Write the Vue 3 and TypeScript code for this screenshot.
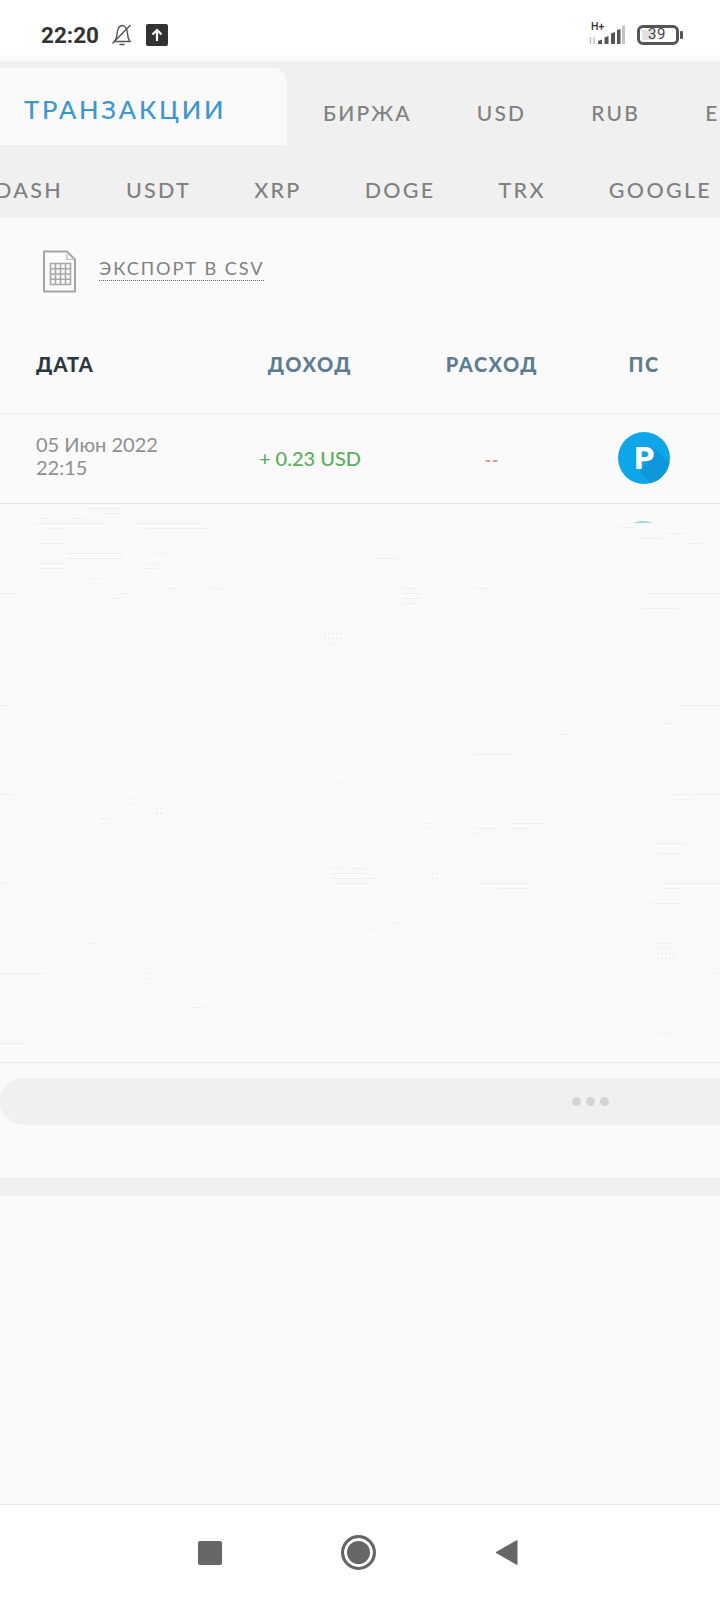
<script setup lang="ts">
const rowOne = ['БИРЖА', 'USD', 'RUB', 'EUR']
const rowTwo = ['DASH', 'USDT', 'XRP', 'DOGE', 'TRX', 'GOOGLE']

// Faint rendering residue left on the empty table area: [x1, x2, y]
const residue: [number, number, number][] = [
  [88,120,508],[100,120,513],[38,50,518],[70,82,518],[85,90,518],[35,108,523],[135,200,523],
  [50,63,528],[145,208,528],[40,65,543],[65,122,553],[155,167,553],[68,122,558],[40,65,563],
  [147,158,563],[40,65,568],[143,157,568],[90,100,578],[0,20,593],[120,130,593],[175,180,593],
  [165,180,588],[210,223,588],[110,120,598],[620,633,527],[668,685,533],[637,663,538],[687,702,543],
  [372,398,558],[402,420,588],[402,420,593],[402,420,598],[402,420,603],[475,488,588],[647,720,593],
  [642,678,608],[285,289,648],[0,9,705],[680,720,705],[661,675,723],[556,572,734],[473,512,754],
  [340,347,783],[0,14,794],[673,720,794],[673,689,799],[512,544,823],[475,496,828],[512,528,828],
  [471,478,833],[654,686,843],[657,680,853],[331,342,868],[351,367,868],[331,367,873],[333,379,878],
  [333,372,883],[480,530,883],[498,530,888],[663,720,883],[663,682,888],
  [0,7,883],[652,680,903],[393,400,923],[370,374,928],[445,450,918],[85,95,943],
  [0,45,973],[714,720,973],[192,204,1007],[659,670,1033],[0,25,1043]
]
const dotted: [number, number, number][] = [
  [324,342,633],[324,342,638],[330,342,643],[126,135,798],[126,135,803],[156,164,808],[156,164,813],
  [101,110,818],[103,110,823],[425,430,823],[425,430,828],[432,441,873],[432,441,878],
  [657,675,943],[657,675,948],[657,675,953],[657,675,958],[142,152,973],[142,152,978]
]
const toPath = (list: [number, number, number][]) =>
  list.map(([a, b, y]) => `M${a} ${y + 0.5}H${b}`).join('')
const residuePath = toPath(residue)
const dottedPath = toPath(dotted)
</script>

<template>
  <div class="page">
    <header class="status">
      <span class="clock">22:20</span>
      <svg class="bell" width="22" height="22" viewBox="0 0 22 22" fill="none" stroke="#555" stroke-width="1.400">
        <path d="M3.500 17.500c1.500-1.600 2.300-3.800 2.500-7C6.300 5.500 8 1.800 11 1.500c3.300-.2 5.300 3.500 5.600 8.500.2 3 .9 5.800 2.400 7.500Z" />
        <path d="M8.500 20.500h5M1.500 19.500 19.500 1" />
      </svg>
      <span class="upload">
        <svg width="22" height="22" viewBox="0 0 22 22" fill="none" stroke="#fff" stroke-width="2.200">
          <path d="M11 17V6.500M6.500 10.500 11 6l4.500 4.500" />
        </svg>
      </span>
      <div class="status-right">
        <div class="signal">
          <span class="hplus">H+</span>
          <svg width="38" height="20" viewBox="0 0 38 20">
            <path d="M2.500 12v7M6 12v7" stroke="#bbb" stroke-width="1.300" />
            <path d="M10 19v-3l4-1.500V19ZM16.500 19v-6.500l4-1.500v8ZM23 19V8.500l4-1.500v12ZM29 19V5l3.500-1v15Z" fill="#555" />
            <path d="M34 19V1l3-1v19Z" fill="#c4c4c4" />
          </svg>
        </div>
        <div class="battery">
          <span class="battery-body"><i class="battery-fill"></i><b class="battery-num">39</b></span>
          <i class="battery-tip"></i>
        </div>
      </div>
    </header>

    <main class="content">
      <div class="tabs">
        <div class="tab-row first">
          <span class="tab-active">ТРАНЗАКЦИИ</span>
          <span v-for="t in rowOne" :key="t" class="tab">{{ t }}</span>
        </div>
        <div class="tab-row second">
          <span v-for="t in rowTwo" :key="t" class="tab">{{ t }}</span>
        </div>
      </div>

      <div class="export">
        <svg width="35" height="44" viewBox="0 0 35 44" fill="none">
          <path d="M2 2.500h23l8 8v32H2Z" stroke="#a5a5a5" stroke-width="2" stroke-linejoin="round" />
          <path d="M25 2.500V10.500h8" stroke="#bdbdbd" stroke-width="1.200" />
          <path d="M8.500 14.500h20v21h-20ZM8.500 19.700h20M8.500 25h20M8.500 30.200h20M13.500 14.500v21M18.500 14.500v21M23.500 14.500v21" stroke="#a8a8a8" stroke-width="1.600" />
        </svg>
        <span class="export-link">ЭКСПОРТ В CSV</span>
      </div>

      <div class="thead grid">
        <span class="th-date">ДАТА</span>
        <span class="th">ДОХОД</span>
        <span class="th">РАСХОД</span>
        <span class="th">ПС</span>
      </div>
      <div class="trow grid">
        <div class="date">05 Июн 2022<br />22:15</div>
        <span class="income">+ 0.23 USD</span>
        <span class="expense">--</span>
        <span class="ps">
          <svg width="52" height="52" viewBox="0 0 52 52">
            <defs><clipPath id="ps-clip"><circle cx="26" cy="26" r="26" /></clipPath></defs>
            <circle cx="26" cy="26" r="26" fill="#0fa5e9" />
            <path d="M36 16 L62 42 L42 62 L22 40Z" fill="#0f97dc" clip-path="url(#ps-clip)" />
            <text x="26.500" y="37" text-anchor="middle" class="ps-letter">P</text>
          </svg>
        </span>
      </div>

      <div class="empty"></div>

      <div class="pager"><i></i><i></i><i></i></div>
      <div class="strip"></div>
    </main>

    <nav class="nav">
      <i class="nav-square"></i>
      <i class="nav-circle"></i>
      <svg width="23" height="27" viewBox="0 0 23 27"><path d="M22 1.500v24L1 13.500Z" fill="#666" stroke="#666" stroke-linejoin="round" /></svg>
    </nav>

    <svg class="residue" width="720" height="1600" viewBox="0 0 720 1600" fill="none">
      <path :d="residuePath" stroke="#efefef" stroke-width="1" />
      <path :d="dottedPath" stroke="#e9e9e9" stroke-width="1" stroke-dasharray="2 2" />
      <path d="M633 522.500Q643 520.300 653 522.500Z" fill="#4fb0dc" />
    </svg>
  </div>
</template>

<style scoped>
.page {
  position: relative;
  width: 720px;
  min-height: 1600px;
  display: flex;
  flex-direction: column;
  overflow: hidden;
  background: #fafafa;
  font-family: "Lato", "Noto Sans", sans-serif;
}
.status {
  height: 55px;
  flex: none;
  display: flex;
  align-items: center;
  padding: 14px 37px 0 41px;
  box-sizing: border-box;
  background: #fff;
}
.clock {
  font-family: Roboto, sans-serif;
  font-size: 22.500px;
  font-weight: 700;
  color: #333;
  width: 70px;
}
.upload {
  display: flex;
  width: 22px;
  height: 22px;
  margin-left: 13px;
  border-radius: 2px;
  background: #333;
}
.status-right {
  margin-left: auto;
  display: flex;
  align-items: flex-end;
  gap: 11px;
}
.signal {
  position: relative;
  width: 38px;
  height: 20px;
}
.signal svg { display: block; }
.hplus {
  position: absolute;
  left: 3px;
  top: -3px;
  font: 500 10.500px/10px Roboto, sans-serif;
  color: #333;
}
.battery {
  display: flex;
  align-items: center;
  gap: 1px;
}
.battery-body {
  position: relative;
  width: 42px;
  height: 20px;
  box-sizing: border-box;
  border: 3px solid #555;
  border-radius: 6px;
  display: flex;
  align-items: center;
  justify-content: center;
}
.battery-fill {
  position: absolute;
  left: 2px;
  top: 2px;
  bottom: 2px;
  width: 12px;
  background: #e0e0e0;
}
.battery-num {
  position: relative;
  font: 400 15px/1 Roboto, sans-serif;
  color: #444;
  letter-spacing: 0.5px;
  margin-left: -2px;
}
.battery-tip {
  width: 3px;
  height: 8px;
  background: #555;
  border-radius: 1px;
}
.content {
  flex: 1;
  display: flex;
  flex-direction: column;
  padding-top: 6px;
}
.tabs {
  background: #f0f0f0;
  height: 157px;
  padding-top: 7px;
  box-sizing: border-box;
  overflow: hidden;
}
.tab-row {
  display: flex;
  align-items: center;
  white-space: nowrap;
}
.first {
  height: 77px;
  gap: 65px;
}
.first .tab {
  margin-top: 12px;
  font-size: 21px;
  letter-spacing: 2.200px;
}
.second {
  height: 73px;
  gap: 63px;
  margin-left: -5px;
  padding-top: 16px;
  box-sizing: border-box;
}
.tab, .tab-active { flex: none; }
.tab-active {
  align-self: stretch;
  display: flex;
  align-items: center;
  box-sizing: border-box;
  width: 287px;
  margin-right: -29px;
  padding: 5px 0 0 24px;
  border-radius: 0 14px 0 0;
  background: #fafafa;
  color: #3d97cf;
  font-size: 25.500px;
  font-weight: 500;
  letter-spacing: 2.800px;
}
.tab {
  color: #808080;
  font-size: 21.500px;
  font-weight: 500;
  letter-spacing: 2.300px;
}
.export {
  display: flex;
  align-items: center;
  gap: 22px;
  height: 44px;
  margin-top: 31px;
  padding-left: 42px;
}
.export-link {
  font-size: 18.200px;
  line-height: 20px;
  letter-spacing: 1.900px;
  color: #808080;
  padding-bottom: 2px;
  border-bottom: 1px dotted #666;
  margin-top: -3px;
}
.grid {
  display: grid;
  grid-template-columns: 184px 180px 184px 120px;
  padding-left: 36px;
  align-items: center;
}
.thead {
  height: 121px;
  padding-top: 22px;
  box-sizing: border-box;
  border-bottom: 1px solid #eeeeee;
}
.th-date {
  font-size: 20px;
  font-weight: 900;
  color: #2b383e;
  letter-spacing: 1px;
}
.th {
  font-size: 20px;
  font-weight: 900;
  color: #5f7d90;
  letter-spacing: 1.500px;
  text-align: center;
}
.trow {
  height: 90px;
  padding-bottom: 2px;
  box-sizing: border-box;
  border-bottom: 1px solid #e6e6e6;
}
.date {
  font-size: 20px;
  line-height: 23px;
  color: #8f8f8f;
  padding-bottom: 3px;
}
.income {
  text-align: center;
  font-size: 20px;
  font-weight: 500;
  color: #5cae5c;
}
.expense {
  text-align: center;
  font-size: 17px;
  font-weight: 700;
  color: #d98f85;
  letter-spacing: 1px;
  padding-top: 3px;
}
.ps {
  display: flex;
  justify-content: center;
}
.ps svg { display: block; }
.ps-letter {
  font-family: Roboto, sans-serif;
  font-size: 31px;
  font-weight: 900;
  fill: #fff;
}
.empty {
  height: 558px;
  flex: none;
  border-bottom: 1px solid #e6e6e6;
}
.pager {
  height: 47px;
  margin-top: 15px;
  flex: none;
  display: flex;
  align-items: center;
  justify-content: flex-end;
  gap: 5px;
  padding-right: 111px;
  border-radius: 24px 0 0 24px;
  background: #f0f0f0;
}
.pager i {
  width: 9px;
  height: 9px;
  border-radius: 50%;
  background: #d4d4d4;
}
.strip {
  height: 18px;
  margin-top: 53px;
  flex: none;
  background: #f0f0f0;
}
.nav {
  height: 96px;
  flex: none;
  box-sizing: border-box;
  border-top: 1px solid #e6e6e6;
  background: #fff;
  display: flex;
  align-items: center;
  gap: 119px;
  padding-left: 198px;
}
.nav-square {
  width: 24px;
  height: 24px;
  border-radius: 2px;
  background: #666;
}
.nav-circle {
  width: 35px;
  height: 35px;
  box-sizing: border-box;
  border: 3px solid #666;
  border-radius: 50%;
  background: #666;
  box-shadow: inset 0 0 0 3px #fff;
}
.residue {
  position: absolute;
  left: 0;
  top: 0;
  pointer-events: none;
}
</style>
